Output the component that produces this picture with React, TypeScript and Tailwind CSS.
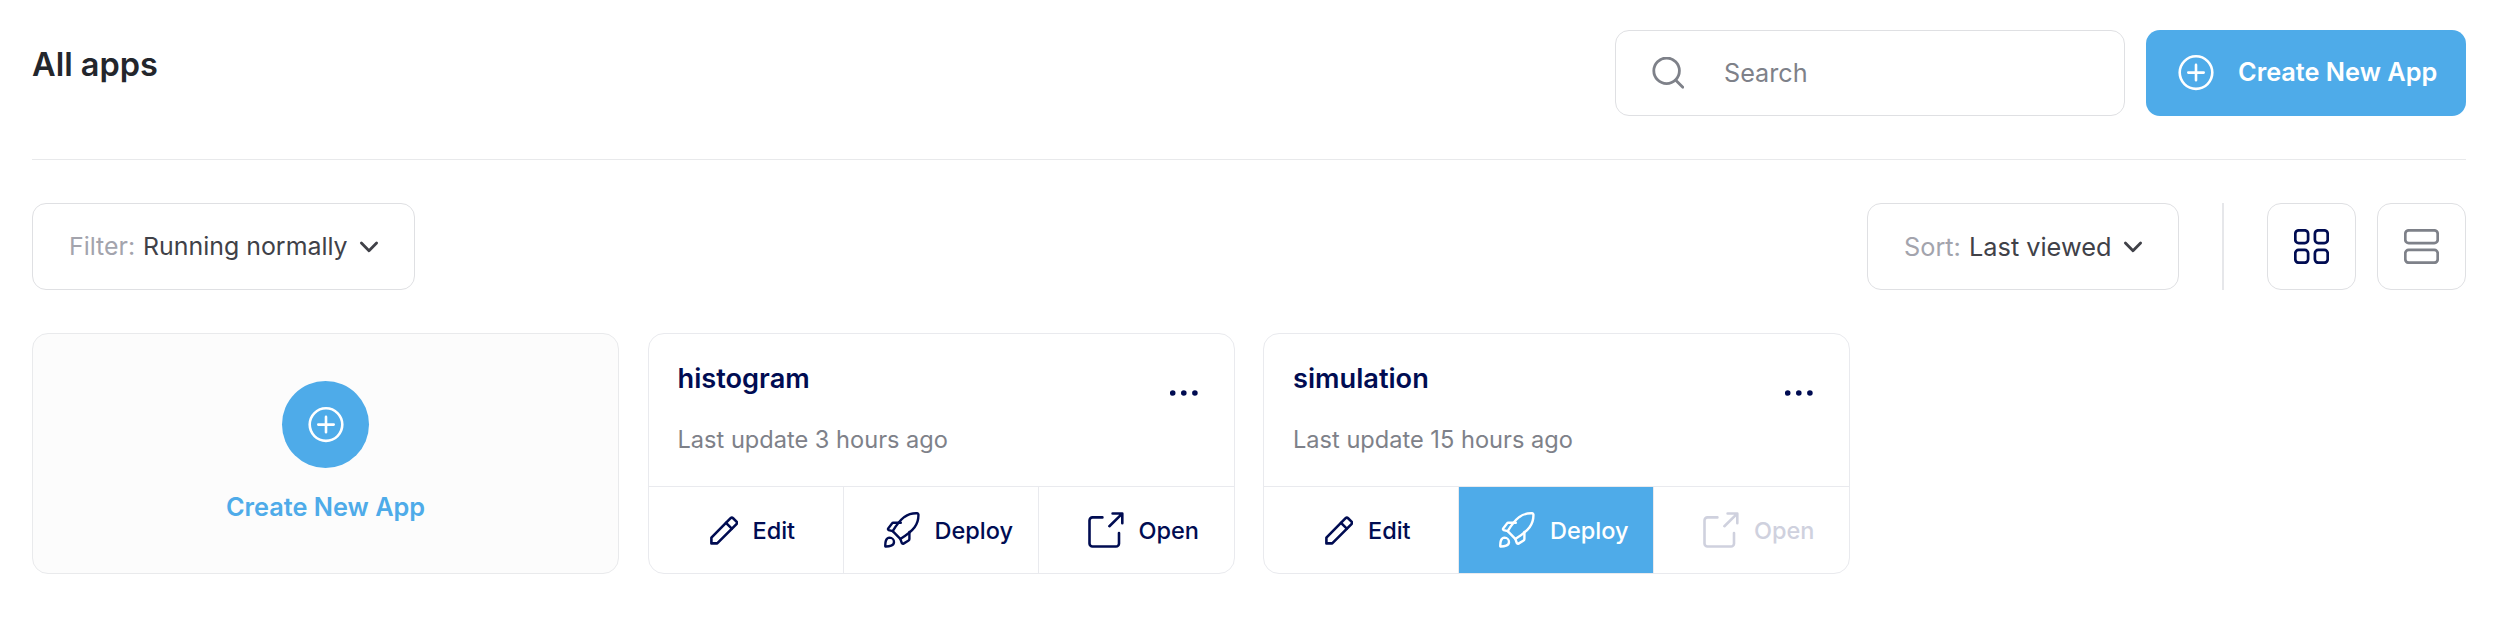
import type { ReactNode } from "react";

function PlusCircle() {
  return (
    <svg className="h-9 w-9 shrink-0" viewBox="0 0 36 36" fill="none" stroke="currentColor" strokeWidth="2.6" strokeLinecap="round">
      <circle cx="18" cy="17.6" r="16.3" />
      <path d="M18 9.9v15.4M10.3 17.6h15.4" />
    </svg>
  );
}

function SearchIcon() {
  return (
    <svg className="h-8 w-8 shrink-0 text-[#7e8189]" viewBox="0 0 32 32" fill="none" stroke="currentColor" strokeWidth="2.8" strokeLinecap="round">
      <circle cx="14.6" cy="13.8" r="12.8" />
      <path d="M23.8 23.2l7 7" />
    </svg>
  );
}

function Chevron() {
  return (
    <svg className="h-3 w-5 shrink-0" viewBox="0 0 20 12" fill="none" stroke="currentColor" strokeWidth="2.8" strokeLinecap="round" strokeLinejoin="round">
      <path d="M2.4 2l7.6 7.8L17.6 2" />
    </svg>
  );
}

function GridIcon() {
  return (
    <svg className="h-[35px] w-[35px]" viewBox="0.5 0.5 35 35" fill="none" stroke="currentColor" strokeWidth="2.7">
      <rect x="1.8" y="1.8" width="12.8" height="12.8" rx="3.4" />
      <rect x="21.4" y="1.8" width="12.8" height="12.8" rx="3.4" />
      <rect x="1.8" y="21.4" width="12.8" height="12.8" rx="3.4" />
      <rect x="21.4" y="21.4" width="12.8" height="12.8" rx="3.4" />
    </svg>
  );
}

function ListIcon() {
  return (
    <svg className="h-[35px] w-[35px]" viewBox="0.5 0.5 35 35" fill="none" stroke="currentColor" strokeWidth="2.7">
      <rect x="1.8" y="1.8" width="32.4" height="12.8" rx="3.4" />
      <rect x="1.8" y="21.4" width="32.4" height="12.8" rx="3.4" />
    </svg>
  );
}

function PencilIcon() {
  return (
    <svg className="h-[29px] w-7 shrink-0" viewBox="0 0 28 29" fill="none" stroke="currentColor" strokeWidth="2.6" strokeLinecap="round" strokeLinejoin="round">
      <path d="M1.4 27.4V21.6L20.6 2.2a1.8 1.8 0 0 1 2.5 0l3.4 3.4a1.8 1.8 0 0 1 0 2.5L7.2 27.4Z" />
      <path d="M16 6.9l5.8 5.8" />
    </svg>
  );
}

function RocketIcon() {
  return (
    <svg className="h-9 w-9 shrink-0" viewBox="0 0 36 36" fill="none" stroke="currentColor" strokeWidth="2.4" strokeLinecap="round" strokeLinejoin="round">
      <path d="M8.7 19.2C12.6 12.6 16.4 8 20.4 4.9C24.2 2.2 28.8 1.1 33.2 1.3C34 1.4 34.3 1.7 34.4 2.5C34.6 7 33.4 11.4 30.6 15.2C27.6 19.2 23 22.8 16.3 26.9Z" />
      <path d="M16.8 10.7H9.4C8.8 10.7 8.3 11 8 11.5L4.2 16.4C3.7 17.1 4 17.8 4.7 18.1L8.7 19.2" />
      <path d="M25.4 20v7.1c0 .6-.3 1.1-.8 1.4L19.5 31.6C18.8 32 18.1 31.7 17.8 31L16.3 26.9" />
      <path d="M1.3 34.5C1.1 30.4 1.8 25.6 5.6 25.6C8 25.7 10 27.7 10 30C10 33.8 5.4 34.6 1.3 34.5Z" />
    </svg>
  );
}

function OpenIcon() {
  return (
    <svg className="h-9 w-9 shrink-0" viewBox="0 0 36 36" fill="none" stroke="currentColor" strokeWidth="2.6" strokeLinecap="round" strokeLinejoin="round">
      <path d="M14.4 5.4H4.5a3 3 0 0 0-3 3V31.5a3 3 0 0 0 3 3H28a3 3 0 0 0 3-3V21" />
      <path d="M21.4 14.2L34.2 1.6M24.6 1.5H34.3V11.2" />
    </svg>
  );
}

function Dots() {
  return (
    <svg className="h-2 w-7" viewBox="0 0 28 8" fill="currentColor">
      <circle cx="2.7" cy="4" r="2.8" />
      <circle cx="13.8" cy="4" r="2.8" />
      <circle cx="24.9" cy="4" r="2.8" />
    </svg>
  );
}

function Select({ label, value, className }: { label: string; value: string; className: string }) {
  return (
    <button className={"flex h-[87px] items-center rounded-[14px] border border-[#dfe0e3] pr-[35px] pl-9 whitespace-pre text-[#404148] " + className}>
      <span className="text-[#a3a4ad]">{label} </span>
      <span className="ml-px">{value}</span>
      <span className="ml-auto">
        <Chevron />
      </span>
    </button>
  );
}

function AppCard({ name, updated, pending }: { name: string; updated: string; pending?: boolean }) {
  return (
    <article className="flex h-[241px] w-[587px] flex-col overflow-hidden rounded-2xl border border-[#e9eaee] text-[#000c52]">
      <div className="flex h-[152px] justify-between pt-[25px] pr-9 pl-[29px]">
        <div>
          <h2 className="text-[27.2px] leading-10 font-semibold">{name}</h2>
          <p className="mt-[21px] text-[23.6px] leading-10 text-[#7e8189]">{updated}</p>
        </div>
        <button className="mt-[30px] h-2">
          <Dots />
        </button>
      </div>
      <div className="grid h-[87px] grid-cols-3 border-t border-[#e9eaee] text-[23.5px] font-medium">
        <Action className="gap-[15px] border-r border-[#e9eaee] pl-[61px]" icon={<PencilIcon />} label="Edit" />
        <Action
          className={pending ? "gap-[15px] border-r border-[#e9eaee] bg-[#4eabe9] pl-[40px] text-white" : "gap-[15px] border-r border-[#e9eaee] pl-[40px]"}
          icon={<RocketIcon />}
          label="Deploy"
        />
        <Action className={pending ? "gap-[15px] pl-[49px] text-[#cfd1de]" : "gap-[15px] pl-[49px]"} icon={<OpenIcon />} label="Open" />
      </div>
    </article>
  );
}

function Action({ icon, label, className }: { icon: ReactNode; label: string; className: string }) {
  return (
    <button className={"flex items-center " + className}>
      {icon}
      <span className="pt-0.5">{label}</span>
    </button>
  );
}

export default function App() {
  return (
    <main className="min-h-[644px] w-[2508px] bg-white pt-[30px] pr-[42px] pl-8 font-['Inter',sans-serif]">
      <header className="flex h-[130px] items-start justify-between border-b border-[#e8e9eb]">
        <h1 className="mt-[15px] text-[32.5px] leading-10 font-semibold text-[#23262c]">All apps</h1>
        <div className="flex gap-[21px]">
          <label className="flex h-[86px] w-[510px] items-center gap-[40px] rounded-[14px] border border-[#dfe0e3] pl-9">
            <SearchIcon />
            <input
              type="text"
              placeholder="Search"
              className="h-10 min-w-0 flex-1 pb-px text-[25.2px] outline-none placeholder:text-[#7e8189] placeholder:opacity-100"
            />
          </label>
          <button className="flex h-[86px] w-80 items-center gap-6 rounded-[14px] bg-[#4eabe9] pl-8 text-[25.3px] font-semibold whitespace-nowrap text-white">
            <PlusCircle />
            <span className="pb-[3px]">Create New App</span>
          </button>
        </div>
      </header>

      <div className="mt-[43px] flex items-center justify-between">
        <Select label="Filter:" value="Running normally" className="w-[383px] text-[24.9px]" />
        <div className="flex items-center">
          <Select label="Sort:" value="Last viewed" className="w-[312px] text-[25.3px]" />
          <div className="mr-[43px] ml-[43px] h-[87px] w-0.5 bg-[#e6e7ea]" />
          <button className="mr-[21px] flex h-[87px] w-[89px] items-center justify-center rounded-[14px] border border-[#dfe0e3] text-[#000c52]">
            <GridIcon />
          </button>
          <button className="flex h-[87px] w-[89px] items-center justify-center rounded-[14px] border border-[#dfe0e3] text-[#7e8189]">
            <ListIcon />
          </button>
        </div>
      </div>

      <div className="mt-[43px] flex gap-[28.5px]">
        <button className="flex h-[241px] w-[587px] flex-col items-center rounded-2xl border border-[#e9eaec] bg-[#fcfcfc] pt-[47px]">
          <span className="flex h-[87px] w-[87px] items-center justify-center rounded-full bg-[#4eabe9] text-white">
            <PlusCircle />
          </span>
          <span className="mt-[19px] text-[25.3px] leading-10 font-semibold text-[#4eabe9]">Create New App</span>
        </button>
        <AppCard name="histogram" updated="Last update 3 hours ago" />
        <AppCard name="simulation" updated="Last update 15 hours ago" pending />
      </div>
    </main>
  );
}
